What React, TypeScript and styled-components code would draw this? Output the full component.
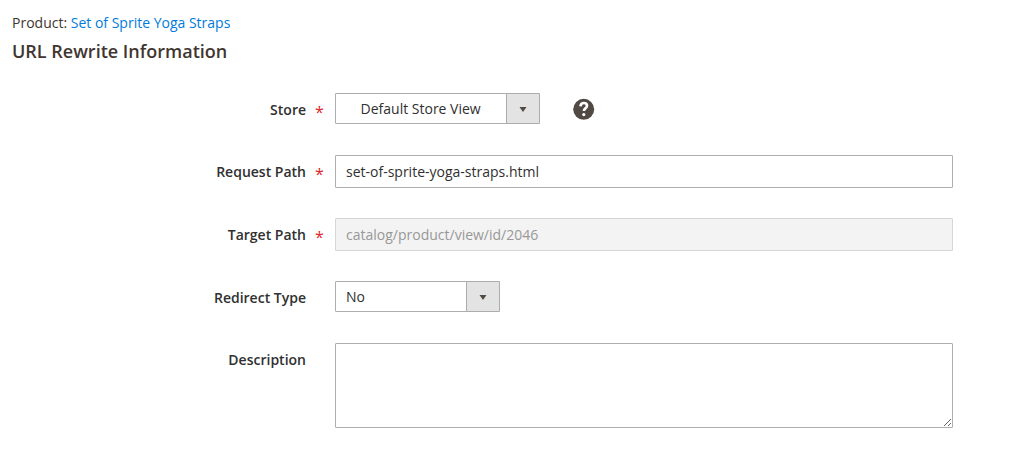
import React from "react";
import styled, { createGlobalStyle } from "styled-components";

const GlobalStyle = createGlobalStyle`
  *, *::before, *::after { box-sizing: border-box; }
  body {
    margin: 0;
    background: #ffffff;
    color: #41362f;
    font-family: "Open Sans", "Noto Sans", sans-serif;
    font-size: 14px;
    line-height: 20px;
  }
`;

const Page = styled.main`
  padding: 13px 12px 24px;
`;

const ProductLine = styled.p`
  margin: 0;
`;

const ProductLink = styled.a`
  color: #007bdb;
  text-decoration: none;
  &:hover { text-decoration: underline; }
`;

const Fieldset = styled.fieldset`
  margin: 0;
  padding: 0;
  border: 0;
  min-width: 0;
`;

const Legend = styled.legend`
  padding: 6px 0 0;
  font-size: 18px;
  font-weight: 600;
  line-height: 24px;
`;

const Fields = styled.div`
  display: flex;
  flex-direction: column;
  gap: 30px;
  padding-top: 30px;
`;

const Field = styled.div`
  display: grid;
  grid-template-columns: 323fr 618fr 59fr;
  align-items: start;
  min-height: 32px;
`;

const Label = styled.label`
  display: flex;
  justify-content: flex-end;
  padding-top: 7px;
  color: #303030;
  font-weight: 600;
`;

const Marker = styled.span`
  width: 29px;
  padding-left: 9px;
  color: #e22626;
  font-size: 16px;
  font-weight: 400;
  line-height: 24px;
`;

const Control = styled.div`
  display: flex;
  align-items: center;
  gap: 33px;
`;

const TextInput = styled.input`
  width: 100%;
  height: 33px;
  padding: 0 10px;
  border: 1px solid #adadad;
  border-radius: 1px;
  background: #ffffff;
  color: #303030;
  font: inherit;
  &:disabled {
    border-color: #d6d6d6;
    background: #f3f3f3;
    color: #989898;
  }
`;

const TextArea = styled.textarea`
  display: block;
  width: 100%;
  height: 85px;
  padding: 6px 10px;
  border: 1px solid #adadad;
  border-radius: 1px;
  background: #ffffff;
  color: #303030;
  font: inherit;
  resize: both;
`;

const SelectBox = styled.div<{ $width: number }>`
  display: grid;
  width: ${(p) => p.$width}px;
`;

const Select = styled.select`
  grid-area: 1 / 1;
  appearance: none;
  width: 100%;
  height: 31px;
  padding: 0 40px 0 10px;
  border: 1px solid #adadad;
  border-radius: 1px;
  background: #ffffff;
  color: #303030;
  font: inherit;
`;

const SelectArrow = styled.span`
  grid-area: 1 / 1;
  justify-self: end;
  display: flex;
  align-items: center;
  justify-content: center;
  width: 34px;
  padding-top: 2px;
  border: 1px solid #adadad;
  border-radius: 0 1px 1px 0;
  background: #e3e3e3;
  pointer-events: none;
`;

const HelpButton = styled.button`
  display: flex;
  padding: 0;
  border: 0;
  background: none;
  cursor: help;
`;

function HelpIcon() {
  return (
    <svg width="22" height="22" viewBox="0 0 22 22" aria-hidden="true">
      <circle cx="10.7" cy="11.3" r="10.5" fill="#514943" />
      <path
        d="M7.5 8.4C7.6 6.1 8.9 5 10.8 5c2 0 3.2 1.1 3.2 2.8 0 2.5-3.1 2.6-3.1 5.3"
        fill="none"
        stroke="#ffffff"
        strokeWidth="2.7"
      />
      <circle cx="10.8" cy="16.6" r="1.6" fill="#ffffff" />
    </svg>
  );
}

interface FieldLabelProps {
  htmlFor: string;
  required?: boolean;
  children: string;
}

function FieldLabel({ htmlFor, required, children }: FieldLabelProps) {
  return (
    <Label htmlFor={htmlFor}>
      {children}
      <Marker aria-hidden="true">{required ? "*" : ""}</Marker>
    </Label>
  );
}

interface DropDownProps {
  id: string;
  width: number;
  options: string[];
}

function DropDown({ id, width, options }: DropDownProps) {
  return (
    <SelectBox $width={width}>
      <Select id={id}>
        {options.map((option) => (
          <option key={option}>{option}</option>
        ))}
      </Select>
      <SelectArrow>
        <svg width="8" height="5" viewBox="0 0 8 5" aria-hidden="true">
          <path d="M0.5 0h7L4 5z" fill="#514943" />
        </svg>
      </SelectArrow>
    </SelectBox>
  );
}

export default function App() {
  return (
    <Page>
      <GlobalStyle />
      <ProductLine>
        Product: <ProductLink href="#product">Set of Sprite Yoga Straps</ProductLink>
      </ProductLine>
      <form>
        <Fieldset>
          <Legend>URL Rewrite Information</Legend>
          <Fields>
            <Field>
              <FieldLabel htmlFor="store" required>Store</FieldLabel>
              <Control>
                <DropDown
                  id="store"
                  width={205}
                  options={["\u00a0\u00a0\u00a0\u00a0Default Store View"]}
                />
                <HelpButton type="button" aria-label="Help">
                  <HelpIcon />
                </HelpButton>
              </Control>
            </Field>
            <Field>
              <FieldLabel htmlFor="request-path" required>Request Path</FieldLabel>
              <Control>
                <TextInput id="request-path" defaultValue="set-of-sprite-yoga-straps.html" required />
              </Control>
            </Field>
            <Field>
              <FieldLabel htmlFor="target-path" required>Target Path</FieldLabel>
              <Control>
                <TextInput id="target-path" defaultValue="catalog/product/view/id/2046" disabled />
              </Control>
            </Field>
            <Field>
              <FieldLabel htmlFor="redirect-type">Redirect Type</FieldLabel>
              <Control>
                <DropDown
                  id="redirect-type"
                  width={165}
                  options={["No", "Temporary (302)", "Permanent (301)"]}
                />
              </Control>
            </Field>
            <Field>
              <FieldLabel htmlFor="description">Description</FieldLabel>
              <Control>
                <TextArea id="description" />
              </Control>
            </Field>
          </Fields>
        </Fieldset>
      </form>
    </Page>
  );
}
